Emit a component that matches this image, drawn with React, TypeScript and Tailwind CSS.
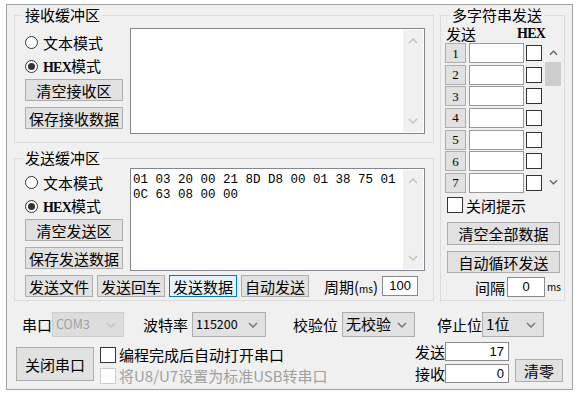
import React from 'react';

const Chevron = ({ up = false, color = '#c0c0c0', w = 10 }: { up?: boolean; color?: string; w?: number }) => (
    <svg width={w} height="6" viewBox="0 0 10 6">
        <path d={up ? 'M1 5 L5 1 L9 5' : 'M1 1 L5 5 L9 1'} fill="none" stroke={color} strokeWidth="1.4" />
    </svg>
);

const Btn = ({ children, className = '' }: { children: React.ReactNode; className?: string }) => (
    <button type="button" className={`flex items-center justify-center border border-[#adadad] bg-[#e1e1e1] leading-none ${className}`}>
        {children}
    </button>
);

const Hex = () => <span className="font-[family-name:'Liberation_Serif',serif] text-[14px] font-bold tracking-[-0.8px]">HEX</span>;

const Radio = ({ checked = false, children }: { checked?: boolean; children: React.ReactNode }) => (
    <div className="flex h-[24px] items-center">
        <span className="flex h-[13px] w-[13px] items-center justify-center rounded-full border border-[#333] bg-white">
            {checked && <span className="h-[7px] w-[7px] rounded-full bg-[#333]" />}
        </span>
        <span className="ml-[5px] leading-none">{children}</span>
    </div>
);

const Check = ({ children, disabled = false, className = '' }: { children: React.ReactNode; disabled?: boolean; className?: string }) => (
    <div className={`flex items-center ${className} ${disabled ? 'text-[#a0a0a0]' : ''}`}>
        <span className={`h-[16px] w-[16px] border bg-white ${disabled ? 'border-[#cccccc]' : 'border-[#333]'}`} />
        <span className="ml-[3px] leading-none">{children}</span>
    </div>
);

const GroupBox = ({ title, className, titleClass, children }: { title: string; className: string; titleClass: string; children: React.ReactNode }) => (
    <div className={`relative border border-[#dcdcdc] ${className}`}>
        <span className={`absolute top-[-10px] bg-[#f0f0f0] px-[2px] leading-[18px] ${titleClass}`}>{title}</span>
        {children}
    </div>
);

const TextPane = ({ h, text }: { h: string; text?: string }) => (
    <div className={`ml-[7px] flex w-[295px] border border-[#828790] bg-white ${h}`}>
        <div className="flex-1 whitespace-pre pl-[2px] pt-[4px] font-[family-name:'Liberation_Mono',monospace] text-[12.5px] leading-[15px]">
            {text}
        </div>
        <div className="my-[1px] mr-[1px] flex w-[20px] flex-col items-center justify-between bg-[#f0f0f0] py-[8px]">
            <Chevron up />
            <Chevron />
        </div>
    </div>
);

const Select = ({ value, w, disabled = false, small = false }: { value: string; w: string; disabled?: boolean; small?: boolean }) => (
    <div
        className={`flex h-[25px] items-center justify-between border pl-[3px] pr-[7px] ${w} ${
            disabled ? 'border-[#cccccc] bg-[#dcdcdc] text-[#a0a0a0]' : 'border-[#adadad] bg-[#e1e1e1]'
        }`}
    >
        <span className={small ? 'text-[12.5px]' : ''}>{value}</span>
        <Chevron color={disabled ? '#c4c4c4' : '#707070'} w={10} />
    </div>
);

const Field = ({ value, w, h, align = 'right' }: { value: string; w: string; h: string; align?: string }) => (
    <div
        className={`flex items-center border border-[#8a8a8a] bg-white px-[4px] font-[family-name:'Liberation_Sans',sans-serif] text-[13px] ${w} ${h} ${
            align === 'right' ? 'justify-end' : 'justify-center'
        }`}
    >
        {value}
    </div>
);

export default function App() {
    return (
        <div className="h-[400px] w-[583px] bg-white pl-[6px] pt-[4px] font-[family-name:'Noto_Sans_CJK_SC',sans-serif] text-[15px] text-black">
            <div className="flex h-[386px] w-[567px] flex-col border border-[#a0a0a0] bg-[#f0f0f0]">
                {/* top: buffers + multi string */}
                <div className="flex pl-[7px] pt-[10px]">
                    <div className="flex w-[420px] flex-col">
                        <GroupBox title="接收缓冲区" className="h-[128px] pl-[10px] pt-[12px]" titleClass="left-[8px]">
                            <div className="flex">
                                <div className="flex w-[98px] flex-col pt-[2px]">
                                    <Radio>文本模式</Radio>
                                    <Radio checked>
                                        <Hex />模式
                                    </Radio>
                                    <Btn className="mt-[1px] h-[22px] w-[98px]">清空接收区</Btn>
                                    <Btn className="mt-[6px] h-[22px] w-[98px]">保存接收数据</Btn>
                                </div>
                                <TextPane h="h-[106px]" />
                            </div>
                        </GroupBox>

                        <GroupBox title="发送缓冲区" className="mt-[15px] h-[143px] pl-[10px] pt-[9px]" titleClass="left-[8px]">
                            <div className="flex">
                                <div className="flex w-[98px] flex-col pt-[2px]">
                                    <Radio>文本模式</Radio>
                                    <Radio checked>
                                        <Hex />模式
                                    </Radio>
                                    <Btn className="mt-[1px] h-[22px] w-[98px]">清空发送区</Btn>
                                    <Btn className="mt-[6px] h-[22px] w-[98px]">保存发送数据</Btn>
                                </div>
                                <TextPane h="h-[103px]" text={'01 03 20 00 21 8D D8 00 01 38 75 01\n0C 63 08 00 00'} />
                            </div>
                            <div className="mt-[4px] flex items-center gap-[4px]">
                                <Btn className="h-[22px] w-[68px]">发送文件</Btn>
                                <Btn className="h-[22px] w-[68px]">发送回车</Btn>
                                <Btn className="h-[22px] w-[68px] !border-[#0078d7] !bg-[#e5f1fb]">发送数据</Btn>
                                <Btn className="h-[22px] w-[68px]">自动发送</Btn>
                                <span className="ml-[11px] leading-none">
                                    周期(<span className="text-[10px]">ms</span>)
                                </span>
                                <Field value="100" w="w-[36px]" h="h-[20px]" align="center" />
                            </div>
                        </GroupBox>
                    </div>

                    <GroupBox title="多字符串发送" className="ml-[6px] h-[286px] w-[125px] pl-[4px] pt-[9px]" titleClass="left-[9px]">
                        <div className="flex h-[16px] w-[100px] items-center justify-between">
                            <span className="ml-[1px] leading-none">发送</span>
                            <Hex />
                        </div>
                        <div className="mt-[2px] flex">
                            <div className="flex flex-col gap-[1.67px]">
                                {[1, 2, 3, 4, 5, 6, 7].map((n) => (
                                    <div key={n} className="flex h-[20px] items-center">
                                        <Btn className="h-[20px] w-[21px] font-[family-name:'Liberation_Serif',serif] text-[13px]">{n}</Btn>
                                        <div className="ml-[3px] h-[20px] w-[55px] border border-[#9a9a9a] bg-white" />
                                        <span className="ml-[2px] h-[16px] w-[16px] border border-[#333] bg-white" />
                                    </div>
                                ))}
                            </div>
                            <div className="ml-[3px] flex h-[150px] w-[16px] flex-col items-center">
                                <div className="mt-[7px]">
                                    <Chevron up color="#606060" w={9} />
                                </div>
                                <div className="mt-[6px] h-[24px] w-[16px] bg-[#cdcdcd]" />
                                <div className="mt-auto mb-[8px]">
                                    <Chevron color="#606060" w={9} />
                                </div>
                            </div>
                        </div>
                        <Check className="ml-[2px] mt-[3px] h-[18px]">关闭提示</Check>
                        <Btn className="ml-[2px] mt-[8px] h-[23px] w-[113px]">清空全部数据</Btn>
                        <Btn className="ml-[2px] mt-[6px] h-[22px] w-[113px]">自动循环发送</Btn>
                        <div className="ml-[30px] mt-[4px] flex h-[20px] items-center">
                            <span className="leading-none">间隔</span>
                            <div className="ml-[2px]">
                                <Field value="0" w="w-[38px]" h="h-[20px]" align="center" />
                            </div>
                            <span className="ml-[2px] text-[10px] leading-none">ms</span>
                        </div>
                    </GroupBox>
                </div>

                {/* port settings */}
                <div className="mt-[11px] flex h-[25px] items-center pl-[15px]">
                    <span className="leading-none">串口</span>
                    <Select value="COM3" w="w-[72px]" disabled small />
                    <span className="ml-[19px] leading-none">波特率</span>
                    <div className="ml-[4px]">
                        <Select value="115200" w="w-[74px]" small />
                    </div>
                    <span className="ml-[27px] leading-none">校验位</span>
                    <div className="ml-[4px]">
                        <Select value="无校验" w="w-[73px]" />
                    </div>
                    <span className="ml-[22px] leading-none">停止位</span>
                    <Select value="1位" w="w-[62px]" />
                </div>

                <div className="mt-[5px] flex items-start pl-[9px]">
                    <Btn className="mt-[5px] h-[34px] w-[78px]">关闭串口</Btn>
                    <div className="ml-[6px] mt-[2px] flex w-[315px] flex-col">
                        <Check className="h-[21px]">编程完成后自动打开串口</Check>
                        <Check className="h-[21px]" disabled>
                            将U8/U7设置为标准USB转串口
                        </Check>
                    </div>
                    <div className="flex flex-col gap-[3px]">
                        <div className="flex items-center">
                            <span className="w-[30px] leading-none">发送</span>
                            <Field value="17" w="w-[64px]" h="h-[19px]" />
                        </div>
                        <div className="flex items-center">
                            <span className="w-[30px] leading-none">接收</span>
                            <Field value="0" w="w-[64px]" h="h-[19px]" />
                        </div>
                    </div>
                    <Btn className="ml-[6px] mt-[17px] h-[23px] w-[48px]">清零</Btn>
                </div>
            </div>
        </div>
    );
}
